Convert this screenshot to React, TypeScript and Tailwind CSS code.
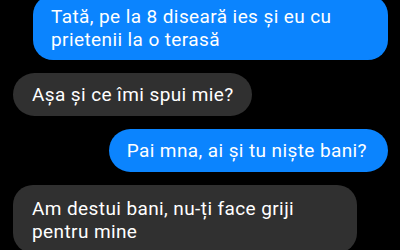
export default function App() {
  return (
    <main
      className="h-[250px] w-[400px] overflow-hidden bg-black text-white"
      style={{ fontFamily: "Roboto, 'Noto Sans', sans-serif" }}
    >
      <div className="-mt-[5px] flex flex-col gap-[13px] text-[19px] leading-[23px] tracking-[0.4px]">
        <div className="ml-[33px] w-[355px] rounded-[20px] bg-[#0b84fe] px-[18px] pt-[10px] pb-[9px]">
          Tată, pe la 8 diseară ies și eu cu prietenii la o terasă
        </div>
        <div className="ml-[13px] self-start rounded-full bg-[#303030] py-[10px] pl-[19px] pr-[18px]">
          Așa și ce îmi spui mie?
        </div>
        <div className="mr-[12px] self-end rounded-full bg-[#0b84fe] py-[10px] pl-[18px] pr-[21px]">
          Pai mna, ai și tu niște bani?
        </div>
        <div className="ml-[13px] w-[344px] rounded-[20px] bg-[#303030] px-[19px] pt-[12px] pb-[10px]">
          Am destui bani, nu-ți face griji pentru mine
        </div>
      </div>
    </main>
  );
}
